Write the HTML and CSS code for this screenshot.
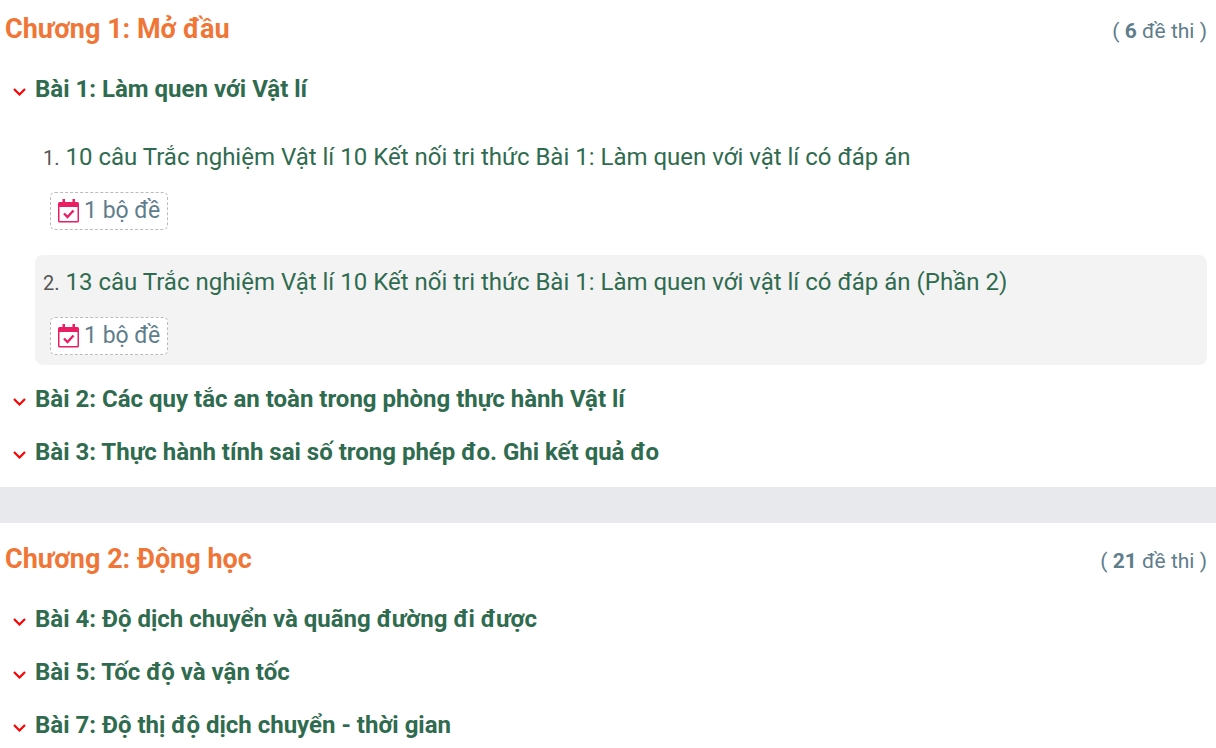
FILE: index.html
```html
<!DOCTYPE html>
<html lang="vi">
<head>
    <meta charset="UTF-8">
    <meta name="viewport" content="width=device-width, initial-scale=1.0">
    <title>Trắc nghiệm Vật lí 10</title>
    <link rel="stylesheet" href="styles.css">
</head>
<body>
    <svg class="sprite" aria-hidden="true">
        <symbol id="arrow" viewBox="0 0 14 10">
            <path d="M1 2 L6.500 7.500 L12 2" fill="none" stroke="currentColor" stroke-width="2.200"/>
        </symbol>
        <symbol id="calendar" viewBox="0 0 22 24">
            <path fill-rule="evenodd" fill="currentColor" d="M4.500 0h2.500v3h7.500V0H17v3h2.500a1.500 1.500 0 0 1 1.500 1.500v17.500a1.500 1.500 0 0 1-1.500 1.500h-18a1.500 1.500 0 0 1-1.500-1.500V4.500a1.500 1.500 0 0 1 1.500-1.500H4.500zM1.500 8v14h18v-14z"/>
            <path d="M6 14.500l3.500 3.500 6-6.500" fill="none" stroke="currentColor" stroke-width="2.400"/>
        </symbol>
    </svg>

    <section class="chapter">
        <div class="chapter-head">
            <h2>Chương 1: Mở đầu</h2>
            <span class="count">( <b>6</b> đề thi )</span>
        </div>
        <button class="lesson" type="button"><svg class="arrow"><use href="#arrow"/></svg>Bài 1: Làm quen với Vật lí</button>
        <ol class="exams">
            <li class="exam">
                <div class="exam-title"><span class="num">1.</span> <a href="#">10 câu Trắc nghiệm Vật lí 10 Kết nối tri thức Bài 1: Làm quen với vật lí có đáp án</a></div>
                <a class="sets" href="#"><svg class="calendar"><use href="#calendar"/></svg>1 bộ đề</a>
            </li>
            <li class="exam active">
                <div class="exam-title"><span class="num">2.</span> <a href="#">13 câu Trắc nghiệm Vật lí 10 Kết nối tri thức Bài 1: Làm quen với vật lí có đáp án (Phần 2)</a></div>
                <a class="sets" href="#"><svg class="calendar"><use href="#calendar"/></svg>1 bộ đề</a>
            </li>
        </ol>
        <button class="lesson" type="button"><svg class="arrow"><use href="#arrow"/></svg>Bài 2: Các quy tắc an toàn trong phòng thực hành Vật lí</button>
        <button class="lesson" type="button"><svg class="arrow"><use href="#arrow"/></svg>Bài 3: Thực hành tính sai số trong phép đo. Ghi kết quả đo</button>
    </section>

    <section class="chapter">
        <div class="chapter-head">
            <h2>Chương 2: Động học</h2>
            <span class="count">( <b>21</b> đề thi )</span>
        </div>
        <button class="lesson" type="button"><svg class="arrow"><use href="#arrow"/></svg>Bài 4: Độ dịch chuyển và quãng đường đi được</button>
        <button class="lesson" type="button"><svg class="arrow"><use href="#arrow"/></svg>Bài 5: Tốc độ và vận tốc</button>
        <button class="lesson" type="button"><svg class="arrow"><use href="#arrow"/></svg>Bài 7: Độ thị độ dịch chuyển - thời gian</button>
    </section>
</body>
</html>
```

FILE: styles.css
```css
* {
    box-sizing: border-box;
}
body {
    margin: 0;
    background: #fff;
    font-family: Roboto, sans-serif;
    font-size: 24px;
    color: #555;
}
a {
    color: inherit;
    text-decoration: none;
}
.sprite {
    display: none;
}
.chapter {
    padding-bottom: 8px;
}
.chapter + .chapter {
    border-top: 36px solid #e8e9ed;
    padding-top: 7px;
    padding-bottom: 0;
}
.chapter-head {
    display: flex;
    align-items: center;
    justify-content: space-between;
    padding: 8px 9px 13px 5px;
}
.chapter-head h2 {
    margin: 0;
    font-size: 27px;
    line-height: 42px;
    font-weight: 700;
    color: #f07637;
}
.count {
    padding-top: 3px;
    font-size: 21px;
    color: #607d8b;
}
.count b {
    font-weight: 700;
}
.lesson {
    display: flex;
    align-items: center;
    gap: 8px;
    width: 100%;
    padding: 0 13px;
    border: none;
    background: none;
    font-family: inherit;
    font-size: 24px;
    font-weight: 700;
    line-height: 53px;
    text-align: left;
    color: #2f6b4f;
    cursor: pointer;
}
.arrow {
    flex: none;
    width: 14px;
    height: 10px;
    margin-top: 5px;
    color: #f00;
}
.exams {
    display: flex;
    flex-direction: column;
    gap: 15px;
    margin: 0;
    padding: 14px 9px 8px 35px;
    list-style: none;
}
.exam {
    padding: 8px 8px 10px;
    border-radius: 8px;
}
.active {
    background: #f3f3f3;
}
.exam-title {
    line-height: 38px;
    color: #2f6b4f;
}
.num {
    font-size: 20px;
    color: #555;
}
.sets {
    display: flex;
    align-items: center;
    gap: 4px;
    width: fit-content;
    margin: 15px 0 0 7px;
    padding: 0 7px;
    border: 1px dashed #bbb;
    border-radius: 5px;
    background: #fff;
    font-size: 23px;
    line-height: 36px;
    color: #607d8b;
}
.calendar {
    width: 22px;
    height: 24px;
    color: #e91e63;
}
```
